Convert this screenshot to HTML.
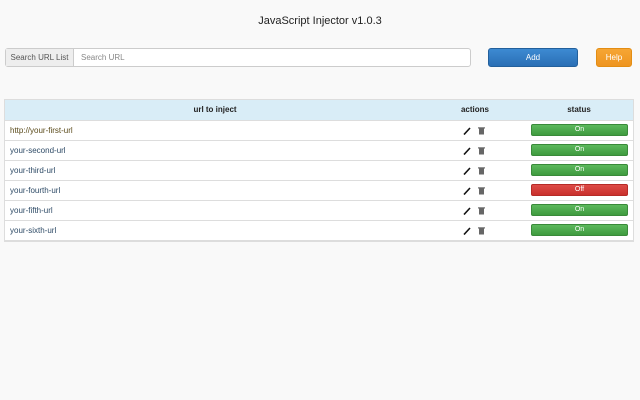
<!DOCTYPE html><html><head><style>
*{box-sizing:border-box}
body{margin:0;background:#f9f9f9;font-family:"Liberation Sans",sans-serif;width:640px;height:400px;overflow:hidden;position:relative}
.t{position:absolute;top:15px;left:0;width:640px;text-align:center;font-size:11px;color:#222}
.ig{position:absolute;left:5px;top:48px;width:466px;height:19px;border:1px solid #ccc;border-radius:3px;background:#fff;font-size:8px}
.ig .a{position:absolute;left:0;top:0;width:68px;height:17px;background:#eee;border-right:1px solid #ccc;color:#555;line-height:17px;text-align:center}
.ig .b{position:absolute;left:75px;top:0;line-height:17px;color:#888}
.btn{position:absolute;top:48px;height:19px;border-radius:3px;color:#fff;font-size:8px;line-height:17px;text-align:center}
.add{left:488px;width:90px;background:linear-gradient(#3d8ad2,#2a6fb5);border:1px solid #23609c}
.help{left:596px;width:36px;background:linear-gradient(#f6a634,#ee9520);border:1px solid #e38d13}
table{position:absolute;left:5px;top:100px;width:628px;border-collapse:collapse;background:#fff;font-size:8px;box-shadow:0 0 0 1px #ddd}
th{background:#d9edf7;height:20px;padding:0;font-weight:bold;color:#222;border-bottom:1px solid #ddd}
td{height:20px;border-bottom:1px solid #ddd;padding:0}
td.u{padding-left:5px;color:#2d4a66}
td.ac{text-align:center}
.s{display:block;margin:0 0 0 6px;width:97px;height:12px;line-height:10px;border-radius:2px;color:#fff;text-align:center;font-size:7px;background:linear-gradient(#5cb85c,#3e9b3e);border:1px solid #3a8a3a}
.off{background:linear-gradient(#dd4b47,#c9302c);border-color:#b52b27}
svg{display:block;margin:0 auto}
</style></head><body>
<div class="t">JavaScript Injector v1.0.3</div>
<div class="ig"><div class="a">Search URL List</div><div class="b">Search URL</div></div>
<div class="btn add">Add</div><div class="btn help">Help</div>
<table>
<tr><th style="width:420px">url to inject</th><th style="width:100px">actions</th><th>status</th></tr>
<tr><td class="u" style="color:#5a4a1a">http://your-first-url</td><td class="ac"><svg width="24" height="9"><path d="M1 8.5L7 2" stroke="#111" stroke-width="1.6"/><rect x="16" y="2.5" width="5" height="6" fill="#666"/><rect x="15" y="1.3" width="7" height="1.2" fill="#666"/></svg></td><td><span class="s">On</span></td></tr>
<tr><td class="u">your-second-url</td><td class="ac"><svg width="24" height="9"><path d="M1 8.5L7 2" stroke="#111" stroke-width="1.6"/><rect x="16" y="2.5" width="5" height="6" fill="#666"/><rect x="15" y="1.3" width="7" height="1.2" fill="#666"/></svg></td><td><span class="s">On</span></td></tr>
<tr><td class="u">your-third-url</td><td class="ac"><svg width="24" height="9"><path d="M1 8.5L7 2" stroke="#111" stroke-width="1.6"/><rect x="16" y="2.5" width="5" height="6" fill="#666"/><rect x="15" y="1.3" width="7" height="1.2" fill="#666"/></svg></td><td><span class="s">On</span></td></tr>
<tr><td class="u">your-fourth-url</td><td class="ac"><svg width="24" height="9"><path d="M1 8.5L7 2" stroke="#111" stroke-width="1.6"/><rect x="16" y="2.5" width="5" height="6" fill="#666"/><rect x="15" y="1.3" width="7" height="1.2" fill="#666"/></svg></td><td><span class="s off">Off</span></td></tr>
<tr><td class="u">your-fifth-url</td><td class="ac"><svg width="24" height="9"><path d="M1 8.5L7 2" stroke="#111" stroke-width="1.6"/><rect x="16" y="2.5" width="5" height="6" fill="#666"/><rect x="15" y="1.3" width="7" height="1.2" fill="#666"/></svg></td><td><span class="s">On</span></td></tr>
<tr><td class="u">your-sixth-url</td><td class="ac"><svg width="24" height="9"><path d="M1 8.5L7 2" stroke="#111" stroke-width="1.6"/><rect x="16" y="2.5" width="5" height="6" fill="#666"/><rect x="15" y="1.3" width="7" height="1.2" fill="#666"/></svg></td><td><span class="s">On</span></td></tr>
</table>
</body></html>
